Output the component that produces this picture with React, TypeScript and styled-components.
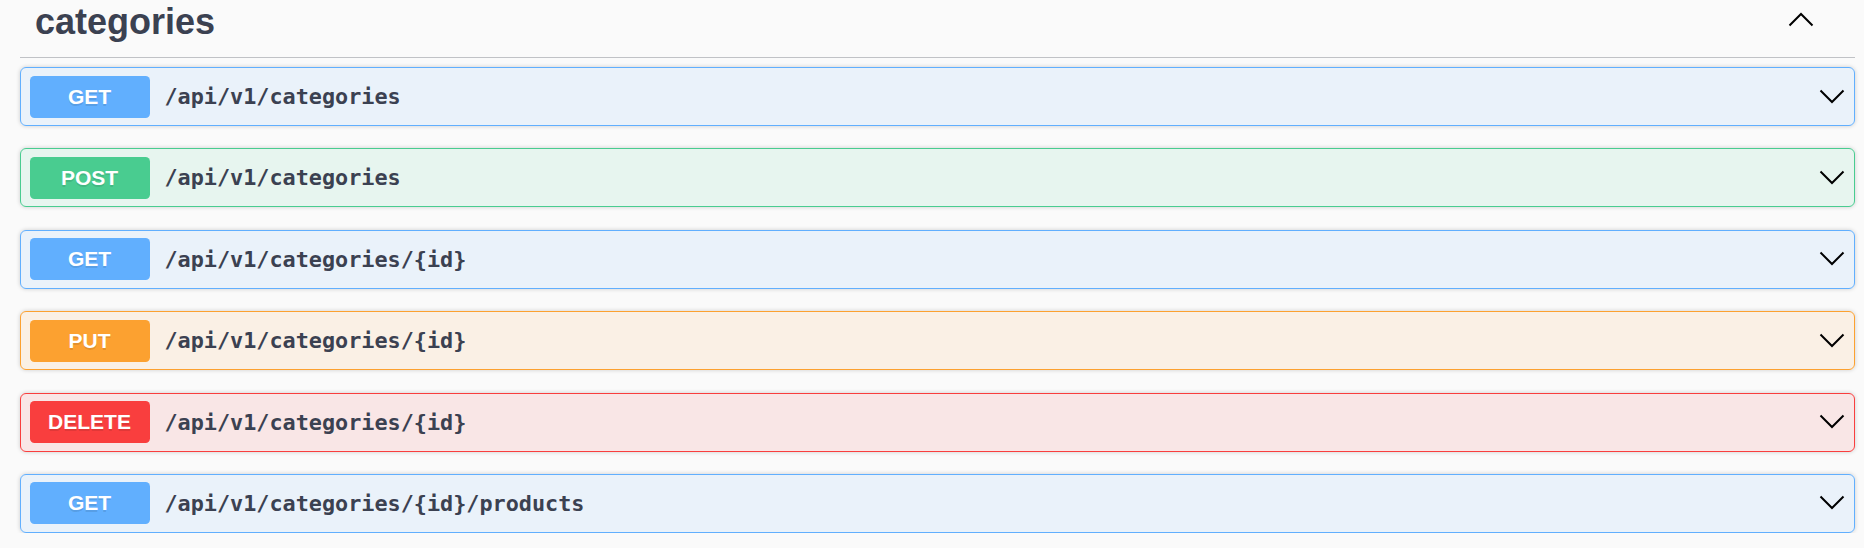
import React from "react";
import styled, { createGlobalStyle } from "styled-components";

const GlobalStyle = createGlobalStyle`
  html, body {
    margin: 0;
    padding: 0;
    background: #fafafa;
  }
  * { box-sizing: border-box; }
`;

type Method = "GET" | "POST" | "PUT" | "DELETE";

const COLORS: Record<Method, { main: string; bg: string }> = {
  GET: { main: "#61affe", bg: "rgba(97,175,254,0.1)" },
  POST: { main: "#49cc90", bg: "rgba(73,204,144,0.1)" },
  PUT: { main: "#fca130", bg: "rgba(252,161,48,0.1)" },
  DELETE: { main: "#f93e3e", bg: "rgba(249,62,62,0.1)" },
};

const Page = styled.div`
  padding: 0 9px 0 20px;
  background: #fafafa;
`;

const TagHeader = styled.div`
  display: flex;
  align-items: flex-start;
  justify-content: space-between;
  padding: 1px 41px 14px 15px;
  border-bottom: 1px solid rgba(59, 65, 81, 0.3);
  margin-bottom: 9px;
`;

const TagTitle = styled.h3`
  margin: 0;
  font-family: "Liberation Sans", Arial, sans-serif;
  font-weight: 700;
  font-size: 36px;
  line-height: 42px;
  color: #3b4151;
`;

const ToggleIcon = styled.svg`
  display: block;
  margin-top: 10px;
  flex: none;
`;

const OpList = styled.div`
  display: flex;
  flex-direction: column;
  gap: 22.4px;
`;

const OpBlock = styled.div<{ $method: Method }>`
  display: flex;
  align-items: center;
  height: 59px;
  padding: 0 9px 0 8.5px;
  border: 1px solid ${(p) => COLORS[p.$method].main};
  background: ${(p) => COLORS[p.$method].bg};
  border-radius: 6px;
  box-shadow: 0 0 4.5px rgba(0, 0, 0, 0.19);
  cursor: pointer;
`;

const MethodBadge = styled.span<{ $method: Method }>`
  flex: none;
  width: 120px;
  height: 42px;
  display: flex;
  align-items: center;
  justify-content: center;
  background: ${(p) => COLORS[p.$method].main};
  border-radius: 4.5px;
  color: #fff;
  font-family: "Liberation Sans", Arial, sans-serif;
  font-weight: 700;
  font-size: 21px;
  text-shadow: 0 1.5px 0 rgba(0, 0, 0, 0.1);
`;

const PathText = styled.span`
  flex: 1;
  padding: 0 15px;
  font-family: "DejaVu Sans Mono", "Liberation Mono", monospace;
  font-weight: 700;
  font-size: 21.8px;
  color: #3b4151;
  white-space: nowrap;
`;

const Chevron = styled.svg`
  display: block;
  flex: none;
`;

const ChevronDown = () => (
  <Chevron width="26" height="16" viewBox="0 0 26 16" aria-hidden>
    <polyline
      points="1.5,1.5 13,13 24.5,1.5"
      fill="none"
      stroke="#000"
      strokeWidth="2"
      strokeLinejoin="miter"
    />
  </Chevron>
);

const ops: { method: Method; path: string }[] = [
  { method: "GET", path: "/api/v1/categories" },
  { method: "POST", path: "/api/v1/categories" },
  { method: "GET", path: "/api/v1/categories/{id}" },
  { method: "PUT", path: "/api/v1/categories/{id}" },
  { method: "DELETE", path: "/api/v1/categories/{id}" },
  { method: "GET", path: "/api/v1/categories/{id}/products" },
];

export default function App() {
  return (
    <>
      <GlobalStyle />
      <Page>
        <TagHeader>
          <TagTitle>categories</TagTitle>
          <ToggleIcon width="26" height="16" viewBox="0 0 26 16" aria-hidden>
            <polyline
              points="1.5,14.5 13,3 24.5,14.5"
              fill="none"
              stroke="#000"
              strokeWidth="2"
            />
          </ToggleIcon>
        </TagHeader>
        <OpList>
          {ops.map((op, i) => (
            <OpBlock key={i} $method={op.method}>
              <MethodBadge $method={op.method}>{op.method}</MethodBadge>
              <PathText>{op.path}</PathText>
              <ChevronDown />
            </OpBlock>
          ))}
        </OpList>
      </Page>
    </>
  );
}
